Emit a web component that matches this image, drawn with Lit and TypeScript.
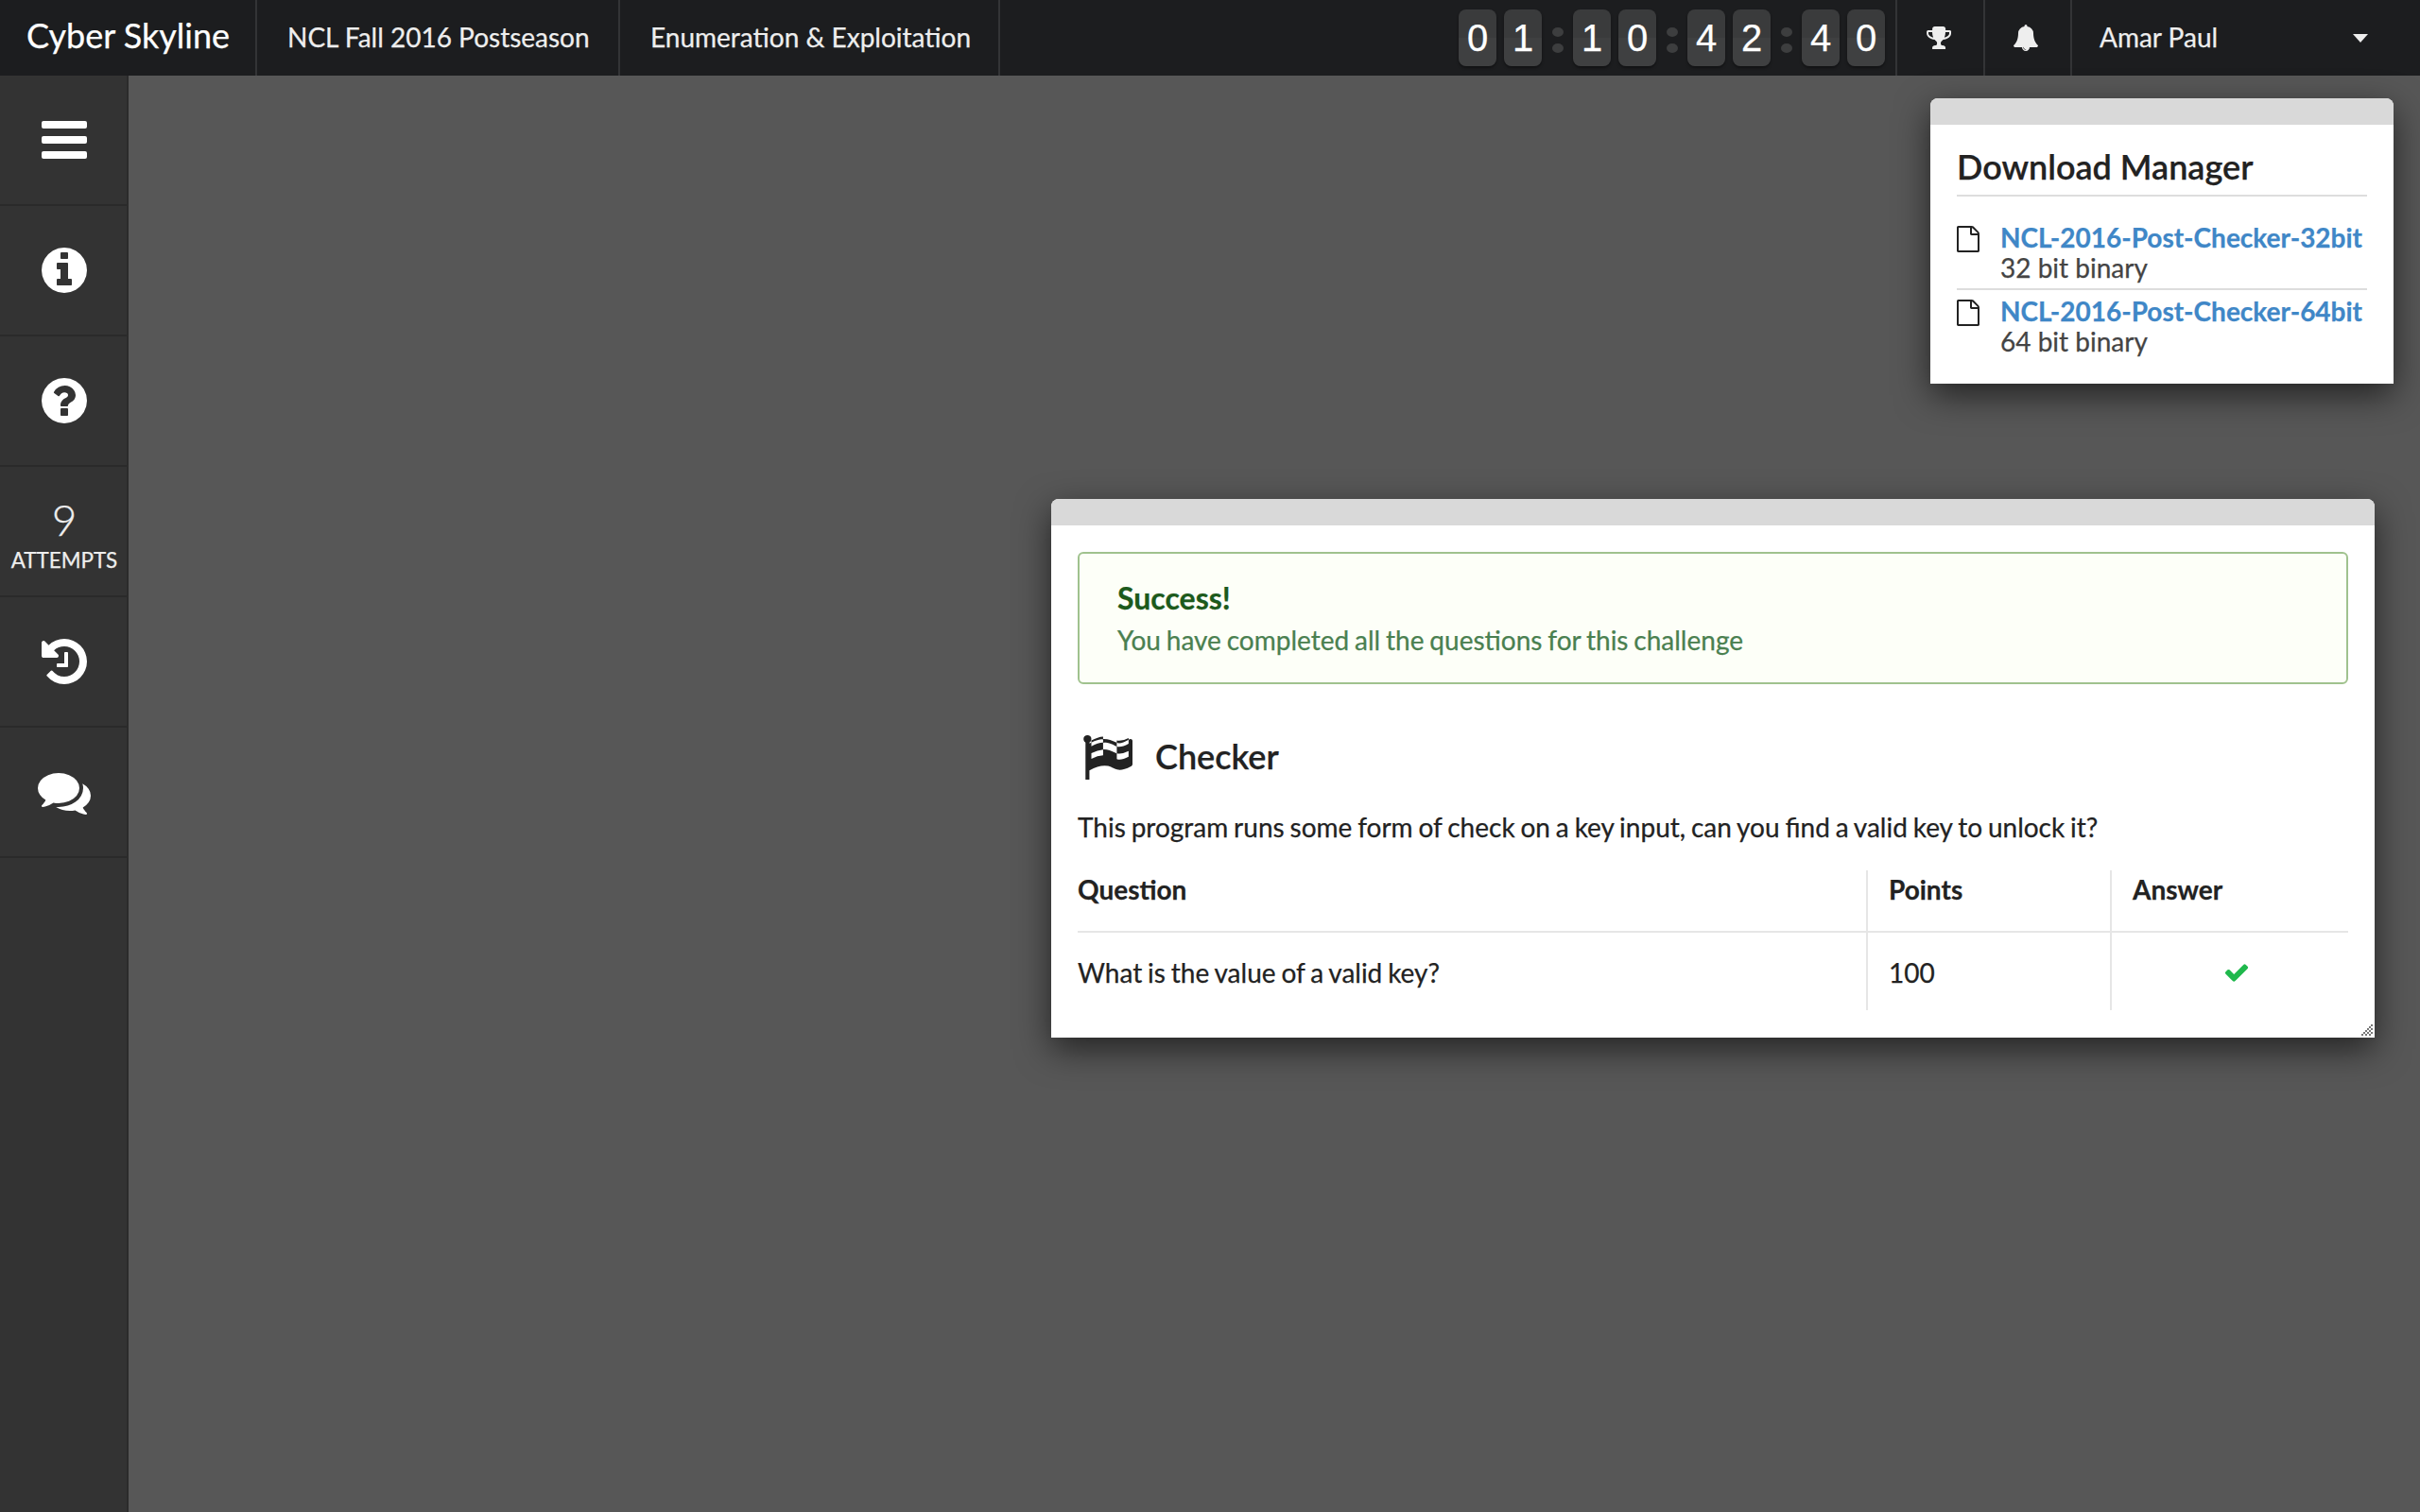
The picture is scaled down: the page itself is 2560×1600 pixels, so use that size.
import { LitElement, css, html, svg } from 'lit'
import { customElement } from 'lit/decorators.js'

const ICONS: Record<string, string> = {
  info: 'M1152 1376v-160q0-14-9-23t-23-9h-96v-512q0-14-9-23t-23-9h-320q-14 0-23 9t-9 23v160q0 14 9 23t23 9h96v320h-96q-14 0-23 9t-9 23v160q0 14 9 23t23 9h448q14 0 23-9t9-23zm-128-896v-160q0-14-9-23t-23-9h-192q-14 0-23 9t-9 23v160q0 14 9 23t23 9h192q14 0 23-9t9-23zm640 416q0 209-103 385.5t-279.5 279.5-385.5 103-385.5-103-279.5-279.5-103-385.5 103-385.5 279.5-279.5 385.5-103 385.5 103 279.5 279.5 103 385.5z',
  question: 'M1024 1376v-192q0-14-9-23t-23-9h-192q-14 0-23 9t-9 23v192q0 14 9 23t23 9h192q14 0 23-9t9-23zm256-672q0-88-55.5-163t-138.5-116-170-41q-243 0-371 213-15 24 8 42l132 100q7 6 19 6 16 0 25-12 53-68 86-92 34-24 86-24 48 0 85.5 26t37.5 59q0 38-20 61t-68 45q-63 28-115.5 86.5t-52.5 125.5v36q0 14 9 23t23 9h192q14 0 23-9t9-23q0-19 21.5-49.5t54.5-49.5q32-18 49-28.5t46-35 44.5-48 28-60.5 12.5-81zm384 192q0 209-103 385.5t-279.5 279.5-385.5 103-385.5-103-279.5-279.5-103-385.5 103-385.5 279.5-279.5 385.5-103 385.5 103 279.5 279.5 103 385.5z',
  history: 'M1664 896q0 156-61 298t-164 245-245 164-298 61q-172 0-327-72.5t-264-204.5q-7-10-6.5-22.5t8.5-20.5l137-138q10-9 25-9 16 2 23 12 73 95 179 147t225 52q104 0 198.5-40.5t163.5-109.5 109.5-163.5 40.5-198.5-40.5-198.5-109.5-163.5-163.5-109.5-198.5-40.5q-98 0-188 35.5t-160 101.5l137 138q31 30 14 69-17 40-59 40h-448q-26 0-45-19t-19-45v-448q0-42 40-59 39-17 69 14l130 129q107-101 244.5-156.5t284.5-55.5q156 0 298 61t245 164 164 245 61 298zm-640-288v448q0 14-9 23t-23 9h-320q-14 0-23-9t-9-23v-64q0-14 9-23t23-9h224v-352q0-14 9-23t23-9h64q14 0 23 9t9 23z',
  comments: 'M1408 768q0 139-94 257t-256.5 186.5-353.5 68.5q-86 0-176-16-124 88-278 128-36 9-86 16h-3q-11 0-20.5-8t-11.5-21q-1-3-1-6.5t.5-6.5 2-6l2.5-5 3.5-5.5 4-5 4.5-5 4-4.5q5-6 23-25t26-29.5 22.5-29 25-38.5 20.5-44q-124-72-195-177t-71-224q0-139 94-257t256.5-186.5 353.5-68.5 353.5 68.5 256.5 186.5 94 257zm384 256q0 120-71 224.5t-195 176.5q10 24 20.5 44t25 38.5 22.5 29 26 29.5 23 25q1 1 4 4.5t4.5 5 4 5 3.5 5.5l2.5 5 2 6 .5 6.5-1 6.5q-3 14-13 22t-22 7q-50-7-86-16-154-40-278-128-90 16-176 16-271 0-472-132 58 4 88 4 161 0 309-45t264-129q125-92 192-212t67-254q0-77-23-152 129 71 204 178t75 230z',
  check: 'M1671 566q0 40-28 68l-724 724-136 136q-28 28-68 28t-68-28l-136-136-362-362q-28-28-28-68t28-68l136-136q28-28 68-28t68 28l294 295 656-657q28-28 68-28t68 28l136 136q28 28 28 68z',
  bell: 'M912 1696q0-16-16-16-59 0-101.5-42.5t-42.5-101.5q0-16-16-16t-16 16q0 73 51.5 124.5t124.5 51.5q16 0 16-16zm816-288q0 52-38 90t-90 38h-448q0 106-75 181t-181 75-181-75-75-181h-448q-52 0-90-38t-38-90q50-42 91-88t85-119.5 74.5-158.5 50-206 19.5-260q0-152 117-282.5t307-158.5q-8-19-8-39 0-40 28-68t68-28 68 28 28 68q0 20-8 39 190 28 307 158.5t117 282.5q0 139 19.5 260t50 206 74.5 158.5 85 119.5 91 88z',
  trophy: 'M522 883q-74-162-74-371h-256v96q0 78 94.5 162t235.5 113zm1078-275v-96h-256q0 209-74 371 141-29 235.5-113t94.5-162zm128-128v128q0 71-41.5 143t-112 130-173 97.5-215.5 44.5q-42 54-95 95-38 34-52.5 72.5t-14.5 90.5q0 55 31 93t99 38q76 0 135 46t59 116v64q0 14-9 23t-23 9h-832q-14 0-23-9t-9-23v-64q0-70 59-116t135-46q68 0 99-38t31-93q0-52-14.5-90.5t-52.5-72.5q-53-41-95-95-113-5-215.5-44.5t-173-97.5-112-130-41.5-143v-128q0-40 28-68t68-28h288v-96q0-66 47-113t113-47h576q66 0 113 47t47 113v96h288q40 0 68 28t28 68z',
  file: 'M1596 380q28 28 48 76t20 88v1152q0 40-28 68t-68 28h-1344q-40 0-68-28t-28-68v-1600q0-40 28-68t68-28h896q40 0 88 20t76 48zm-444-244v376h376q-10-29-22-41l-313-313q-12-12-41-22zm384 1528v-1024h-416q-40 0-68-28t-28-68v-416h-768v1536h1280z',
  flag: 'M832 1000v-192q-181 16-384 117v185q205-96 384-110zm0-418v-197q-172 8-384 126v189q215-111 384-118zm832 463v-184q-235 116-384 71v-224q-20-6-39-15-5-3-33-17t-34.5-17-31.5-15-34.5-15.5-32.5-13-36-12.5-35-8.5-39.5-7.5-39.5-4-44-2q-23 0-49 3v222h19q102 0 192.5 29t197.5 82q19 9 39 15v188q42 17 91 17 120 0 293-92zm0-427v-189q-169 91-306 91-45 0-78-8v196q148 42 384-90zm-1216-154q0 36-17.5 66t-46.5 47v1266q0 13-9.5 22.5t-22.5 9.5h-64q-13 0-22.5-9.5t-9.5-22.5v-1266q-29-17-46.5-47t-17.5-66q0-53 37.5-90.5t90.5-37.5 90.5 37.5 37.5 90.5zm1344 64v763q0 39-35 57-10 5-17 9-218 116-369 116-88 0-158-35l-28-14q-64-33-99-48t-91-29-114-14q-102 0-235.5 44t-228.5 102q-15 9-33 9-16 0-32-8-32-19-32-56v-742q0-35 31-55 35-21 78.5-42.5t114-52 152.5-49.5 155-19q112 0 209 31t209 86q38 19 89 19 122 0 310-112 22-12 31-17 31-16 62 2 31 20 31 55z',
}

const icon = (name: string, size: number) => html`<svg
  width=${size}
  height=${size}
  viewBox="0 0 1792 1792"
  fill="currentColor"
>${svg`<path d=${ICONS[name]}></path>`}</svg>`

@customElement('app-root')
export class AppRoot extends LitElement {
  private groups = [['0', '1'], ['1', '0'], ['4', '2'], ['4', '0']]

  render() {
    return html`
      <div class="top">
        <div class="cell brand">Cyber Skyline</div>
        <div class="cell crumb c1">NCL Fall 2016 Postseason</div>
        <div class="cell crumb c2">Enumeration &amp; Exploitation</div>
        <div class="timer">
          ${this.groups.map(
            (g, i) => html`
              ${i > 0 ? html`<div class="colon"><i></i><i></i></div>` : ''}
              <div class="group">${g.map((d) => html`<span class="tile">${d}</span>`)}</div>
            `,
          )}
        </div>
        <div class="cell tool">${icon('trophy', 28)}</div>
        <div class="cell tool">${icon('bell', 28)}</div>
        <div class="cell user"><span>Amar Paul</span><b class="caret"></b></div>
      </div>
      <div class="main">
        <div class="side">
          <div class="item"><div class="bars"><i></i><i></i><i></i></div></div>
          <div class="item">${icon('info', 56)}</div>
          <div class="item">${icon('question', 56)}</div>
          <div class="item attempts"><span class="num">9</span><span class="lbl">ATTEMPTS</span></div>
          <div class="item">${icon('history', 56)}</div>
          <div class="item">${icon('comments', 56)}</div>
        </div>
        <div class="desk">
          <section class="win downloads">
            <div class="title"></div>
            <div class="dl-body">
              <h3>Download Manager</h3>
              <div class="file first">
                ${icon('file', 28)}
                <div><a>NCL-2016-Post-Checker-32bit</a><p>32 bit binary</p></div>
              </div>
              <div class="file">
                ${icon('file', 28)}
                <div><a>NCL-2016-Post-Checker-64bit</a><p>64 bit binary</p></div>
              </div>
            </div>
          </section>
          <section class="win challenge">
            <div class="title"></div>
            <div class="ch-body">
              <div class="alert">
                <strong>Success!</strong>
                <p>You have completed all the questions for this challenge</p>
              </div>
              <h2>${icon('flag', 58)}<span>Checker</span></h2>
              <p class="desc">This program runs some form of check on a key input, can you find a valid key to unlock it?</p>
              <div class="table">
                <div class="th">Question</div>
                <div class="th sep">Points</div>
                <div class="th sep">Answer</div>
                <div class="td">What is the value of a valid key?</div>
                <div class="td sep">100</div>
                <div class="td sep ok">${icon('check', 28)}</div>
              </div>
            </div>
            <div class="grip"></div>
          </section>
        </div>
      </div>
    `
  }

  static styles = css`
    :host {
      display: block;
      height: 1600px;
      font-family: Lato, 'Liberation Sans', sans-serif;
      font-size: 28px;
      color: #222;
      overflow: hidden;
      -webkit-text-stroke: 0.25px;
    }
    .top {
      display: flex;
      height: 80px;
      background: #1c1d1f;
      color: #eee;
    }
    .cell {
      display: flex;
      align-items: center;
      box-sizing: border-box;
      border-right: 2px solid #333436;
      padding-bottom: 2px;
    }
    .brand {
      width: 272px;
      padding-left: 28px;
      padding-bottom: 6px;
      font-size: 36px;
      color: #fff;
    }
    .crumb {
      padding-left: 32px;
    }
    .c1 {
      width: 384px;
    }
    .c2 {
      width: 402px;
    }
    .timer {
      display: flex;
      margin-left: 485px;
      width: 462px;
      padding-top: 10px;
      box-sizing: border-box;
    }
    .group {
      display: flex;
      gap: 8px;
    }
    .tile {
      width: 40px;
      height: 60px;
      border-radius: 8px;
      background: linear-gradient(#3a3b3c 50%, #3f4041 50%);
      box-shadow: 0 2px 3px rgba(0, 0, 0, 0.4);
      font-family: 'Liberation Sans', sans-serif;
      font-size: 40px;
      line-height: 60px;
      text-align: center;
      color: #fff;
    }
    .colon {
      width: 33px;
      display: flex;
      flex-direction: column;
      align-items: center;
      gap: 7px;
      padding-top: 19px;
      box-sizing: border-box;
    }
    .colon i {
      width: 12px;
      height: 10px;
      border-radius: 50%;
      background: #3d3e3f;
    }
    .tool {
      width: 93px;
      justify-content: center;
      border-left: 2px solid #333436;
      border-right: none;
      padding: 0 4px 0 0;
    }
    .tool + .tool {
      width: 92px;
    }
    .user {
      flex: 1;
      padding-left: 29px;
      border-left: 2px solid #333436;
      border-right: none;
      position: relative;
    }
    .caret {
      position: absolute;
      left: 297px;
      top: 36px;
      border-style: solid;
      border-width: 9px 8px 0;
      border-color: #eee transparent transparent;
    }
    .main {
      display: flex;
      height: 1520px;
    }
    .side {
      width: 136px;
      box-sizing: border-box;
      background: #333;
      border-right: 2px solid #2b2b2b;
      color: #fff;
    }
    .item {
      height: 138px;
      box-sizing: border-box;
      padding-left: 2px;
      border-bottom: 2px solid #2a2a2a;
      display: flex;
      align-items: center;
      justify-content: center;
    }
    .bars {
      display: flex;
      flex-direction: column;
      gap: 8px;
    }
    .bars i {
      width: 48px;
      height: 8px;
      border-radius: 2px;
      background: #fff;
    }
    .attempts {
      flex-direction: column;
      padding-top: 10px;
      color: #eee;
    }
    .num {
      font-size: 46px;
      font-weight: 300;
      line-height: 52px;
    }
    .lbl {
      font-size: 22.4px;
      line-height: 34px;
    }
    .desk {
      flex: 1;
      position: relative;
      background: #575757;
    }
    .win {
      position: absolute;
      background: #fff;
      border-radius: 8px 8px 0 0;
      box-shadow: 0 12px 36px rgba(0, 0, 0, 0.6);
    }
    .title {
      height: 28px;
      background: #d9d9d9;
      border-radius: 8px 8px 0 0;
    }
    .downloads {
      left: 1906px;
      top: 24px;
      width: 490px;
      height: 302px;
    }
    .dl-body {
      padding: 17px 28px 0;
    }
    h3 {
      margin: 0;
      font-size: 36px;
      font-weight: 600;
      line-height: 54px;
      padding-bottom: 3px;
      border-bottom: 2px solid #ddd;
    }
    .file {
      display: flex;
      gap: 20px;
      padding-top: 6px;
      padding-bottom: 3px;
      line-height: 32px;
    }
    .file.first {
      padding-top: 27px;
      padding-bottom: 6px;
      border-bottom: 2px solid #ddd;
    }
    .file svg {
      margin: 4px 0 0 -2px;
      flex: none;
      color: #222;
    }
    .file a {
      display: block;
      color: #3f87c7;
      font-weight: 700;
    }
    .file p {
      margin: 0;
      color: #444;
    }
    .challenge {
      left: 976px;
      top: 448px;
      width: 1400px;
      height: 570px;
    }
    .ch-body {
      padding: 28px 28px 0;
      word-spacing: -1.3px;
    }
    .alert {
      box-sizing: border-box;
      height: 140px;
      padding: 24px 40px 0;
      border: 2px solid #a0c28e;
      border-radius: 6px;
      background: #fdfff8;
      color: #4a8050;
      line-height: 44px;
    }
    .alert strong {
      display: block;
      font-size: 32px;
      line-height: 45px;
      color: #1c5a1c;
    }
    .alert p {
      margin: 0;
    }
    h2 {
      margin: 46px 0 0;
      display: flex;
      align-items: center;
      gap: 24px;
      height: 60px;
      font-size: 36px;
      font-weight: 600;
    }
    h2 svg {
      flex: none;
      margin-bottom: 8px;
    }
    .desc {
      margin: 25px 0 0;
      line-height: 40px;
    }
    .table {
      margin-top: 26px;
      display: grid;
      grid-template-columns: 834px 258px 252px;
    }
    .th {
      height: 66px;
      box-sizing: border-box;
      border-bottom: 2px solid #e6e6e6;
      font-weight: 700;
      line-height: 40px;
    }
    .td {
      height: 82px;
      box-sizing: border-box;
      padding-top: 2px;
      display: flex;
      align-items: center;
    }
    .sep {
      border-left: 2px solid #e6e6e6;
      padding-left: 22px;
      box-sizing: border-box;
    }
    .ok {
      justify-content: center;
      padding-left: 14px;
      color: #1fb84c;
    }
    .grip {
      position: absolute;
      right: 2px;
      bottom: 2px;
      width: 14px;
      height: 14px;
      background: repeating-conic-gradient(#777 0 25%, #fff 0 50%) 0 0 / 4px 4px;
      clip-path: polygon(100% 0, 100% 100%, 0 100%);
    }
  `
}
